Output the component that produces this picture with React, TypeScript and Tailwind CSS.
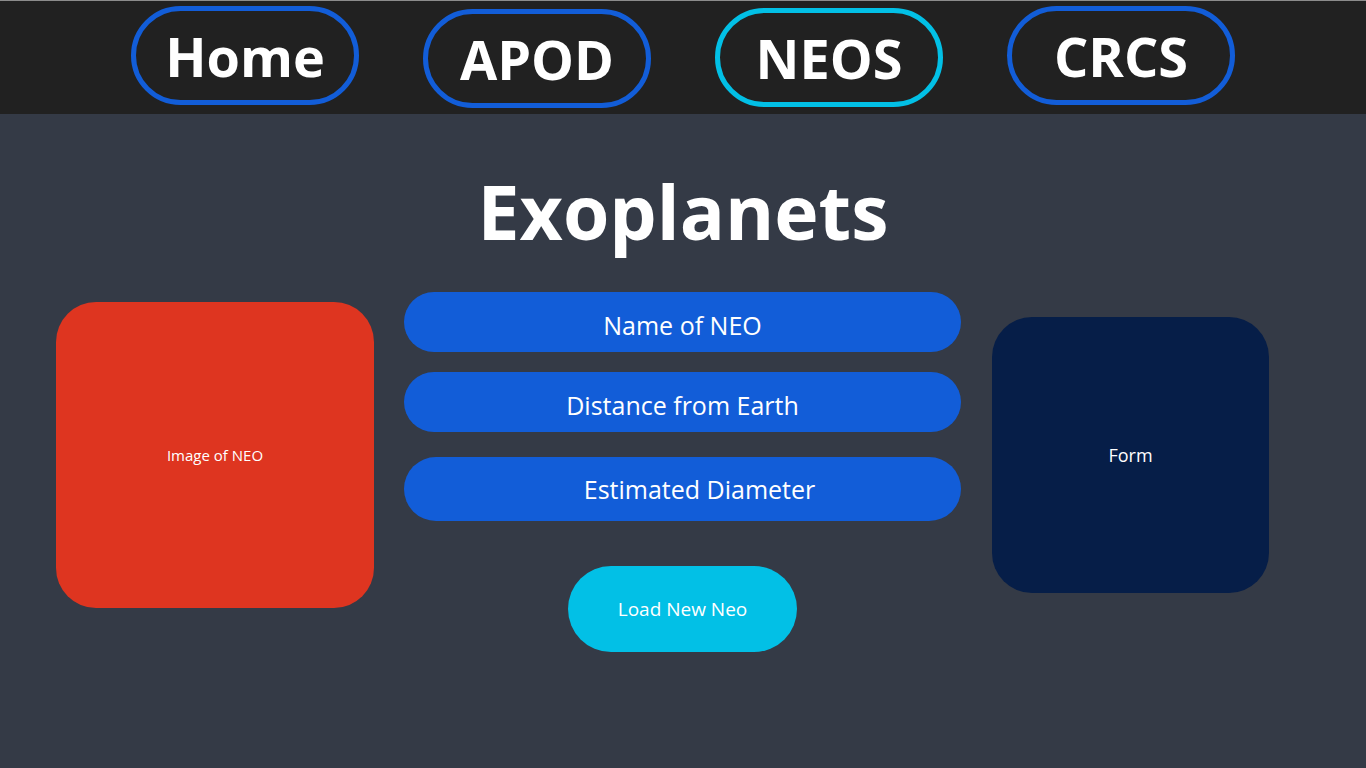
import React from 'react';

const navItems = [
  { label: 'Home', active: false, offset: 'mt-0' },
  { label: 'APOD', active: false, offset: 'mt-[3px]' },
  { label: 'NEOS', active: true, offset: 'mt-[2px]' },
  { label: 'CRCS', active: false, offset: 'mt-0' },
];

const facts = [
  { label: 'Name of NEO', cls: 'h-[60px] pt-[8px]' },
  { label: 'Distance from Earth', cls: 'h-[60px] mt-[20px] pt-[8px]' },
  { label: 'Estimated Diameter', cls: 'h-[64px] mt-[25px] pl-[34px] pt-[2px]' },
];

export default function App() {
  return (
    <div className="min-h-[768px] w-full bg-[#343a46] font-['Open_Sans',sans-serif] text-white">
      <nav className="h-[114px] bg-[#212121] border-t border-[#8c8c8c] flex justify-center items-start gap-[64px] pt-[5px]">
        {navItems.map(item => (
          <a
            key={item.label}
            className={`${item.offset} w-[228px] h-[99px] rounded-full border-[5px] flex items-center justify-center text-[54px] font-bold leading-none ${
              item.active ? 'border-[#02c0e6]' : 'border-[#125dd8]'
            }`}
          >
            {item.label}
          </a>
        ))}
      </nav>

      <main>
        <h1 className="pt-[60px] text-center text-[75px] font-bold leading-none">Exoplanets</h1>

        <div className="flex items-start pl-[56px] mt-[43px]">
          <div className="mt-[10px] w-[318px] h-[306px] rounded-[40px] bg-[#de3520] flex items-center justify-center text-[15px]">
            Image of NEO
          </div>

          <div className="ml-[30px] w-[557px] flex flex-col items-center">
            {facts.map(f => (
              <div
                key={f.label}
                className={`${f.cls} w-full rounded-full bg-[#125dd8] flex items-center justify-center text-[25px]`}
              >
                {f.label}
              </div>
            ))}
            <button className="mt-[45px] w-[229px] h-[86px] rounded-[43px] bg-[#02c0e6] text-[19px] text-white">
              Load New Neo
            </button>
          </div>

          <div className="ml-[31px] mt-[25px] w-[277px] h-[276px] rounded-[40px] bg-[#061e48] flex items-center justify-center text-[18px]">
            Form
          </div>
        </div>
      </main>
    </div>
  );
}
